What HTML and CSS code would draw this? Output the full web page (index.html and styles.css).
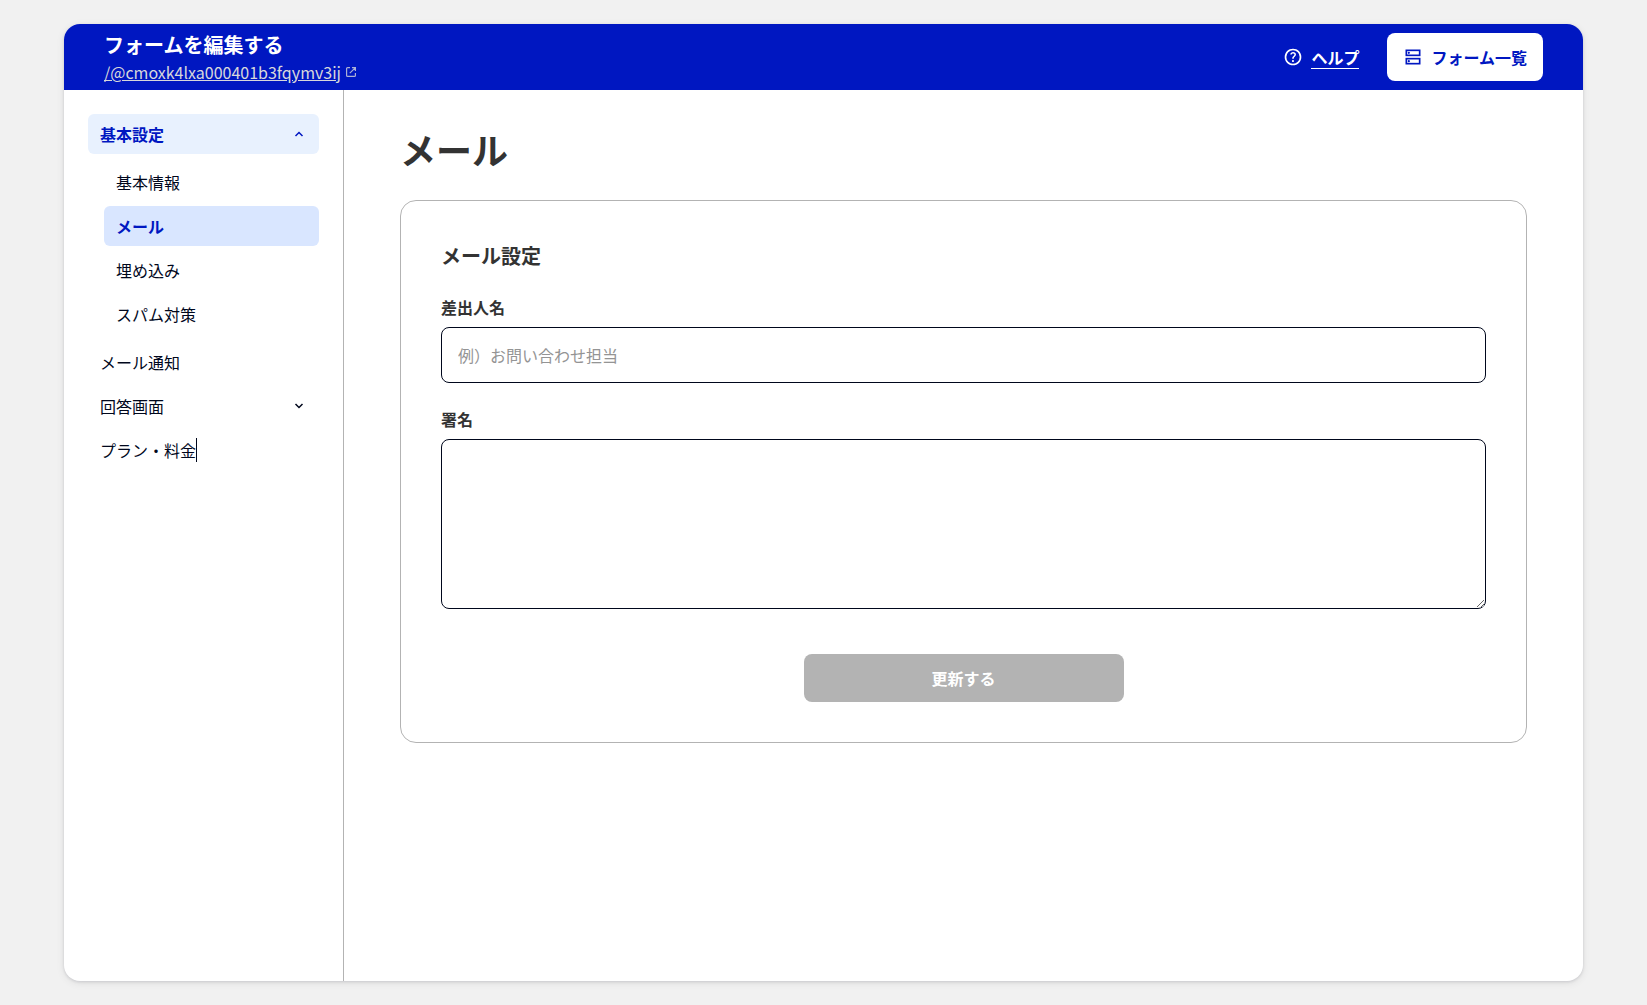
FILE: index.html
```
<!DOCTYPE html>
<html lang="ja">
<head>
<meta charset="utf-8">
<meta name="viewport" content="width=device-width, initial-scale=1">
<title>フォームを編集する</title>
<link rel="stylesheet" href="styles.css">
</head>
<body>
<div class="app">
  <header class="header">
    <div class="header-info">
      <h2 class="header-title">フォームを編集する</h2>
      <a class="form-link" href="#"><span class="form-url">/@cmoxk4lxa000401b3fqymv3ij</span><svg class="icon-external" viewBox="0 0 12 12" aria-hidden="true"><path d="M5 1.600H2.600a1 1 0 0 0-1 1v6.800a1 1 0 0 0 1 1h6.800a1 1 0 0 0 1-1V7M4.800 7.200l5.400-5.400M7 1.600h3.400V5"/></svg></a>
    </div>
    <div class="header-actions">
      <a class="help" href="#"><svg class="icon" viewBox="0 0 24 24" aria-hidden="true"><path fill="currentColor" d="M11.950 18q.525 0 .888-.363t.362-.887-.362-.887-.888-.363-.887.363-.363.887.363.887.887.363m-.9-3.850h1.850q0-.825.188-1.300t1.062-1.300q.65-.65 1.025-1.238T15.550 8.900q0-1.400-1.025-2.150T12.100 6q-1.425 0-2.312.75T8.550 8.550l1.650.65q.125-.45.563-.975T12.100 7.700q.8 0 1.200.438t.4.962q0 .5-.3.938t-.75.812q-1.100.975-1.350 1.475t-.25 1.825M12 22q-2.075 0-3.900-.788t-3.175-2.137-2.137-3.175T2 12t.788-3.900 2.137-3.175T8.100 2.788 12 2t3.900.788 3.175 2.137T21.213 8.100 22 12t-.788 3.900-2.137 3.175-3.175 2.138T12 22m0-2q3.350 0 5.675-2.325T20 12t-2.325-5.675T12 4 6.325 6.325 4 12t2.325 5.675T12 20"/></svg><span class="help-text">ヘルプ</span></a>
      <button class="list-button" type="button"><svg class="icon" viewBox="0 0 24 24" aria-hidden="true"><g fill="none" stroke="currentColor" stroke-width="2"><rect x="4" y="4" width="16" height="6"/><rect x="4" y="14" width="16" height="6"/></g><circle cx="7" cy="7" r="1.300" fill="currentColor"/><circle cx="7" cy="17" r="1.300" fill="currentColor"/></svg>フォーム一覧</button>
    </div>
  </header>
  <div class="body">
    <nav class="sidebar" aria-label="設定">
      <button class="nav-item nav-open" type="button" aria-expanded="true">基本設定<svg class="chevron" viewBox="0 0 16 16" aria-hidden="true"><path d="M4.500 10 8 6.500l3.500 3.500"/></svg></button>
      <div class="subnav">
        <a class="nav-item" href="#">基本情報</a>
        <a class="nav-item nav-current" href="#" aria-current="page">メール</a>
        <a class="nav-item" href="#">埋め込み</a>
        <a class="nav-item" href="#">スパム対策</a>
      </div>
      <a class="nav-item" href="#">メール通知</a>
      <button class="nav-item" type="button" aria-expanded="false">回答画面<svg class="chevron" viewBox="0 0 16 16" aria-hidden="true"><path d="M4.500 6 8 9.500 11.500 6"/></svg></button>
      <a class="nav-item" href="#">プラン・料金<span class="caret"></span></a>
    </nav>
    <main class="main">
      <h1 class="page-title">メール</h1>
      <form class="card">
        <h2 class="card-title">メール設定</h2>
        <div class="field">
          <label class="label" for="sender">差出人名</label>
          <input class="control" id="sender" type="text" placeholder="例）お問い合わせ担当">
        </div>
        <div class="field">
          <label class="label" for="signature">署名</label>
          <textarea class="control control-area" id="signature"></textarea>
        </div>
        <button class="submit" type="submit" disabled>更新する</button>
      </form>
    </main>
  </div>
</div>
</body>
</html>
```
FILE: styles.css
```
* {
  box-sizing: border-box;
}

body {
  margin: 0;
  min-height: 100vh;
  padding: 24px 64px;
  display: flex;
  background: #f1f1f1;
  color: #00071c;
  font-family: "Noto Sans CJK JP", "Noto Sans", sans-serif;
  font-size: 16px;
  line-height: 24px;
}

h1,
h2 {
  margin: 0;
}

a {
  color: inherit;
  text-decoration: none;
}

button,
input,
textarea {
  font: inherit;
  color: inherit;
}

button {
  border: 0;
  background: none;
  cursor: pointer;
}

.app {
  flex: 1;
  min-width: 0;
  display: flex;
  flex-direction: column;
  overflow: hidden;
  border-radius: 16px;
  background: #fff;
  box-shadow: 0 2px 8px rgba(0, 0, 0, 0.08), 0 1px 3px rgba(0, 0, 40, 0.12);
}

.header {
  min-height: 66px;
  padding: 0 40px;
  display: flex;
  align-items: center;
  justify-content: space-between;
  background: #0017c1;
  color: #fff;
}

.header-title {
  font-size: 20px;
  line-height: 30px;
}

.form-link {
  display: flex;
  align-items: center;
  gap: 4px;
  color: #d8d8db;
}

.form-url {
  text-decoration: underline;
}

.icon-external {
  width: 12px;
  height: 12px;
  fill: none;
  stroke: currentColor;
  stroke-width: 1.200;
  opacity: 0.8;
}

.header-actions {
  display: flex;
  align-items: center;
  gap: 28px;
  font-weight: 700;
}

.icon {
  width: 20px;
  height: 20px;
}

.help {
  display: flex;
  align-items: center;
  gap: 8px;
}

.help-text {
  border-bottom: 1px solid;
  line-height: 22px;
}

.list-button {
  height: 48px;
  padding: 0 16px;
  display: flex;
  align-items: center;
  gap: 8px;
  border-radius: 8px;
  background: #fff;
  color: #0017c1;
}

.body {
  flex: 1;
  display: flex;
}

.sidebar {
  width: 280px;
  padding: 24px;
  display: flex;
  flex-direction: column;
  gap: 4px;
  border-right: 1px solid #b3b3b3;
}

.subnav {
  padding: 4px 0 4px 16px;
  display: flex;
  flex-direction: column;
  gap: 4px;
}

.nav-item {
  min-height: 40px;
  padding: 8px 12px;
  display: flex;
  align-items: center;
  border-radius: 6px;
}

.nav-open {
  background: #e8f1fe;
  color: #0017c1;
  font-weight: 700;
}

.nav-current {
  background: #d9e6ff;
  color: #0017c1;
  font-weight: 700;
}

.chevron {
  width: 16px;
  height: 16px;
  margin-left: auto;
  fill: none;
  stroke: currentColor;
  stroke-width: 1.500;
}

.caret {
  width: 1px;
  height: 24px;
  background: currentColor;
}

.main {
  flex: 1;
  min-width: 0;
  padding: 32px 56px;
}

.page-title {
  margin-bottom: 24px;
  color: #333;
  font-size: 36px;
  line-height: 54px;
}

.card {
  padding: 40px;
  display: flex;
  flex-direction: column;
  gap: 24px;
  border: 1px solid #b3b3b3;
  border-radius: 16px;
  color: #333;
}

.card-title {
  font-size: 20px;
  line-height: 30px;
}

.field {
  display: flex;
  flex-direction: column;
  gap: 8px;
}

.label {
  font-weight: 700;
}

.control {
  width: 100%;
  height: 56px;
  padding: 12px 16px;
  border: 1px solid #00071c;
  border-radius: 8px;
  background: #fff;
}

.control::placeholder {
  color: #949494;
}

.control-area {
  height: 170px;
  resize: vertical;
}

.submit {
  width: 320px;
  max-width: 100%;
  height: 48px;
  margin-top: 21px;
  align-self: center;
  border-radius: 8px;
  background: #b3b3b3;
  color: #fff;
  font-weight: 700;
}
```
